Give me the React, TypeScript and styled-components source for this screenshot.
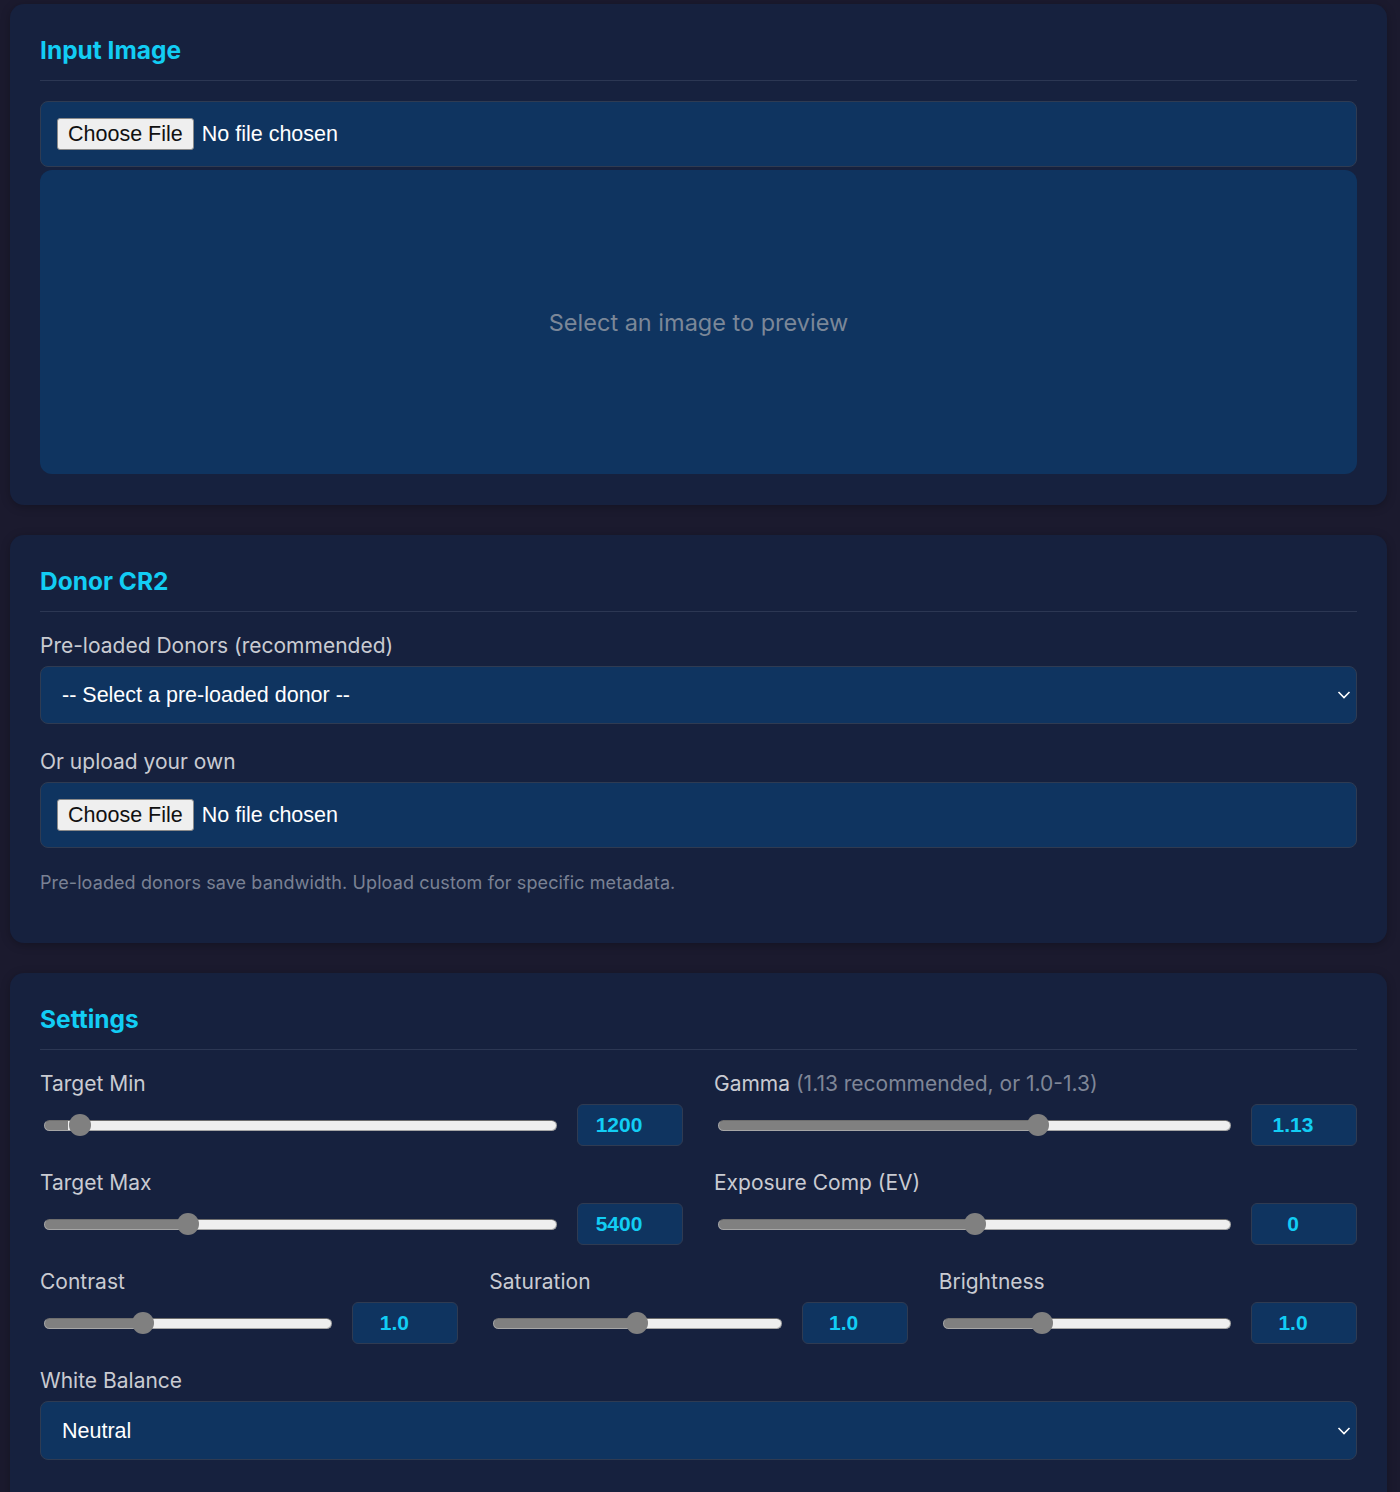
import React from "react";
import styled, { createGlobalStyle } from "styled-components";

const GlobalStyle = createGlobalStyle`
  html, body {
    margin: 0;
    padding: 0;
    background: #1b1a2e;
  }
  body {
    font-family: Inter, "Noto Sans", sans-serif;
    color: #e6e6ea;
  }
  * {
    box-sizing: border-box;
  }
`;

const Page = styled.div`
  display: flex;
  flex-direction: column;
  gap: 30px;
  padding: 4px 13px 40px 10px;
  min-height: 1492px;
`;

const Card = styled.section`
  background: #16213e;
  border-radius: 14px;
  padding: 31px 30px 31px;
  box-shadow: 0 2px 10px rgba(0, 0, 0, 0.25);
`;

const CardTitle = styled.h2`
  margin: 0 0 20px;
  padding-bottom: 15px;
  border-bottom: 1px solid #2c3753;
  font-size: 24.5px;
  line-height: 30px;
  font-weight: 700;
  color: #12cdf4;
`;

const FieldLabel = styled.label`
  display: block;
  margin-bottom: 6px;
  font-size: 21px;
  line-height: 28px;
  color: #c9cbd2;
`;

const Muted = styled.span`
  color: #7f8697;
`;

const FormGroup = styled.div<{ $gap?: number }>`
  margin-bottom: ${(p) => p.$gap ?? 24}px;
`;

const FileBox = styled.div`
  display: flex;
  align-items: center;
  gap: 8px;
  height: 66px;
  padding: 0 16px;
  background: #0f3460;
  border: 1px solid #2f3b52;
  border-radius: 8px;
  font-family: "Liberation Sans", Arial, sans-serif;
  font-size: 21.5px;
  color: #ffffff;
`;

const FileButton = styled.button`
  height: 32px;
  padding: 0 10px;
  background: #efefef;
  border: 1px solid #8a8a8a;
  border-radius: 3px;
  font-family: "Liberation Sans", Arial, sans-serif;
  font-size: 21.5px;
  color: #111;
  cursor: pointer;
`;

const Preview = styled.div`
  display: flex;
  align-items: center;
  justify-content: center;
  height: 304px;
  margin-top: 3px;
  background: #0f3460;
  border-radius: 12px;
  font-size: 23.5px;
  color: #7b8798;
`;

const SelectWrap = styled.div`
  position: relative;
`;

const Select = styled.select<{ $h?: number }>`
  width: 100%;
  height: ${(p) => p.$h ?? 58}px;
  padding: 0 40px 0 21px;
  appearance: none;
  -webkit-appearance: none;
  background: #0f3460;
  border: 1px solid #2f3b52;
  border-radius: 8px;
  font-family: "Liberation Sans", Arial, sans-serif;
  font-size: 21.5px;
  color: #ffffff;
  outline: none;
`;

const Chevron = styled.svg`
  position: absolute;
  right: 6px;
  top: 50%;
  transform: translateY(-50%);
  pointer-events: none;
`;

const Hint = styled.p`
  margin: 23px 0 17px;
  font-size: 18px;
  line-height: 24px;
  letter-spacing: 0.1px;
  color: #7a8194;
`;

const Grid = styled.div<{ $cols: number }>`
  display: grid;
  grid-template-columns: repeat(${(p) => p.$cols}, 1fr);
  column-gap: 31px;
  margin-bottom: 23px;
`;

const SliderRow = styled.div`
  display: flex;
  align-items: center;
  gap: 16px;
`;

const Range = styled.input`
  flex: 1;
  min-width: 0;
  margin: 0 4px;
  height: 24px;
  appearance: none;
  -webkit-appearance: none;
  background: transparent;

  &::-webkit-slider-runnable-track {
    height: 11px;
    border-radius: 6px;
    border: 1px solid #a6a6a6;
    border-top-color: #6e6e6e;
    background: var(--track);
  }

  &::-webkit-slider-thumb {
    -webkit-appearance: none;
    width: 22px;
    height: 22px;
    margin-top: -6.5px;
    border-radius: 50%;
    background: #808080;
    border: none;
  }
`;

const ValueBox = styled.input`
  width: 106px;
  height: 42px;
  padding: 0 30px 0 8px;
  background: #0f3460;
  border: 1px solid #2f3b52;
  border-radius: 6px;
  font-family: "Liberation Sans", Arial, sans-serif;
  font-size: 21px;
  font-weight: 700;
  text-align: center;
  color: #12cdf4;
  outline: none;
`;

type SliderProps = {
  label: React.ReactNode;
  value: string;
  pct: number;
};

function Slider({ label, value, pct }: SliderProps) {
  const track = `linear-gradient(to right, #808080 0%, #808080 ${pct}%, #efefef ${pct}%, #efefef 100%)`;
  return (
    <div>
      <FieldLabel>{label}</FieldLabel>
      <SliderRow>
        <Range
          type="range"
          min={0}
          max={100}
          defaultValue={pct}
          style={{ ["--track" as string]: track } as React.CSSProperties}
        />
        <ValueBox type="text" defaultValue={value} />
      </SliderRow>
    </div>
  );
}

const ChevronIcon = () => (
  <Chevron width="14" height="9" viewBox="0 0 14 9" fill="none">
    <path d="M1.5 1.5l5.5 5.5 5.5-5.5" stroke="#ffffff" strokeWidth="1.6" />
  </Chevron>
);

function FileInput() {
  return (
    <FileBox>
      <FileButton type="button">Choose File</FileButton>
      <span>No file chosen</span>
    </FileBox>
  );
}

export default function App() {
  return (
    <>
      <GlobalStyle />
      <Page>
        <Card>
          <CardTitle>Input Image</CardTitle>
          <FileInput />
          <Preview>Select an image to preview</Preview>
        </Card>

        <Card>
          <CardTitle>Donor CR2</CardTitle>
          <FormGroup>
            <FieldLabel>Pre-loaded Donors (recommended)</FieldLabel>
            <SelectWrap>
              <Select defaultValue="">
                <option value="">-- Select a pre-loaded donor --</option>
              </Select>
              <ChevronIcon />
            </SelectWrap>
          </FormGroup>
          <FormGroup $gap={0}>
            <FieldLabel>Or upload your own</FieldLabel>
            <FileInput />
          </FormGroup>
          <Hint>Pre-loaded donors save bandwidth. Upload custom for specific metadata.</Hint>
        </Card>

        <Card>
          <CardTitle>Settings</CardTitle>
          <Grid $cols={2}>
            <Slider label="Target Min" value="1200" pct={4.5} />
            <Slider
              label={
                <>
                  Gamma <Muted>(1.13 recommended, or 1.0-1.3)</Muted>
                </>
              }
              value="1.13"
              pct={63}
            />
          </Grid>
          <Grid $cols={2}>
            <Slider label="Target Max" value="5400" pct={26.7} />
            <Slider label="Exposure Comp (EV)" value="0" pct={50} />
          </Grid>
          <Grid $cols={3}>
            <Slider label="Contrast" value="1.0" pct={33} />
            <Slider label="Saturation" value="1.0" pct={50} />
            <Slider label="Brightness" value="1.0" pct={33} />
          </Grid>
          <FormGroup>
            <FieldLabel>White Balance</FieldLabel>
            <SelectWrap>
              <Select defaultValue="neutral" $h={59}>
                <option value="neutral">Neutral</option>
                <option value="warm">Warm</option>
                <option value="cool">Cool</option>
              </Select>
              <ChevronIcon />
            </SelectWrap>
          </FormGroup>
        </Card>
      </Page>
    </>
  );
}
